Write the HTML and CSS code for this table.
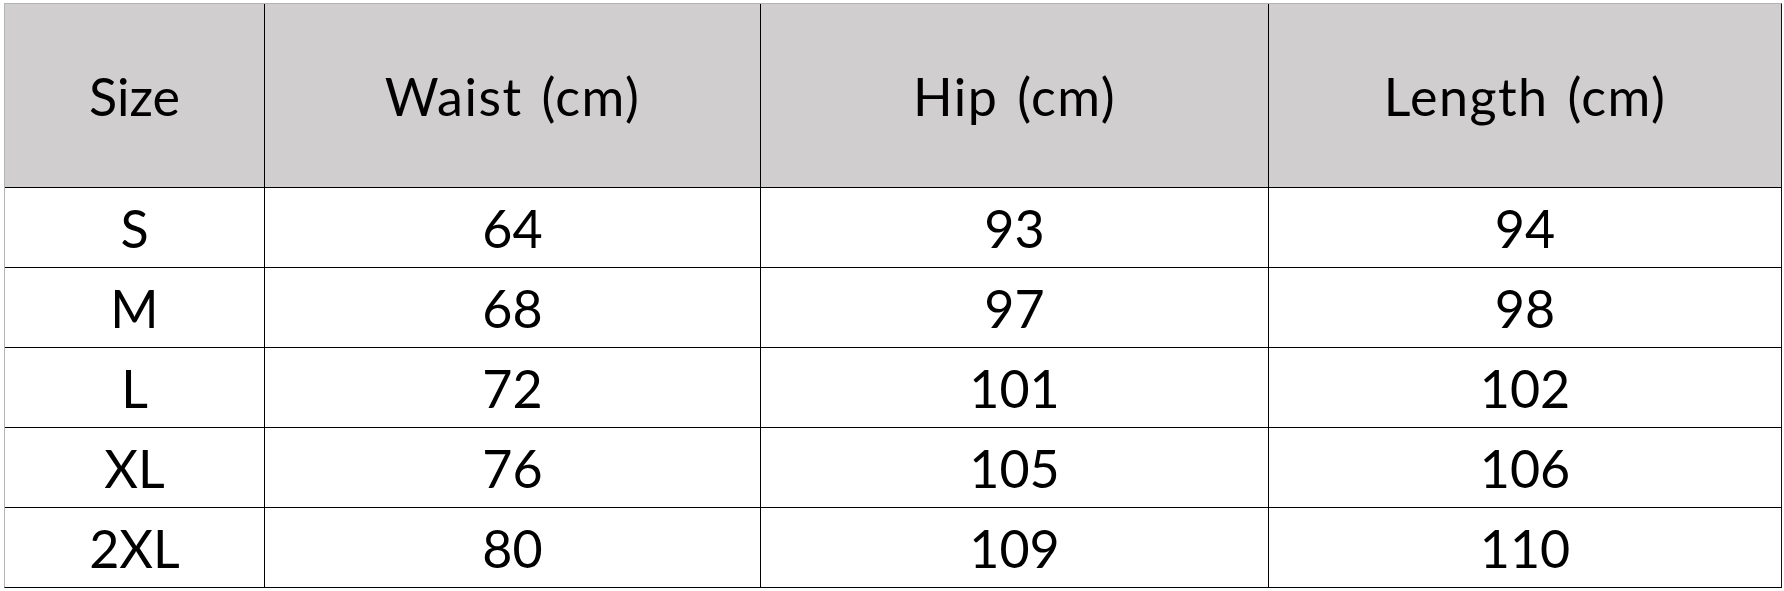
FILE: index.html
```html
<!DOCTYPE html>
<html>
<head>
<meta charset="utf-8">
<link rel="stylesheet" href="styles.css">
</head>
<body>
<div class="sheet">
  <div class="cell head">Size</div>
  <div class="cell head wide">Waist (cm)</div>
  <div class="cell head wide">Hip (cm)</div>
  <div class="cell head wide">Length (cm)</div>
  <div class="cell">S</div><div class="cell">64</div><div class="cell">93</div><div class="cell">94</div>
  <div class="cell">M</div><div class="cell">68</div><div class="cell">97</div><div class="cell">98</div>
  <div class="cell">L</div><div class="cell">72</div><div class="cell">101</div><div class="cell">102</div>
  <div class="cell">XL</div><div class="cell">76</div><div class="cell">105</div><div class="cell">106</div>
  <div class="cell">2XL</div><div class="cell">80</div><div class="cell">109</div><div class="cell">110</div>
</div>
</body>
</html>
```
FILE: styles.css
```css
html, body {
  margin: 0;
  padding: 0;
  background: #ffffff;
}
body {
  padding: 3px 0 0 4px;
}
.sheet {
  display: grid;
  grid-template-columns: 259px 495px 507px 512px;
  grid-template-rows: 183px repeat(5, 79px);
  gap: 1px;
  background: #000;
  border-top: 1px solid #b4b4b4;
  border-left: 1px solid #b4b4b4;
  border-right: 1px solid #111;
  border-bottom: 1px solid #000;
  width: max-content;
}
.cell {
  background: #fff;
  display: flex;
  align-items: center;
  justify-content: center;
  font-family: Lato, "Liberation Sans", sans-serif;
  font-size: 52px;
  color: #000;
  line-height: 1;
}
.head {
  background: #d0cece;
}
.wide {
  letter-spacing: 1.5px;
  word-spacing: 4px;
}
```
